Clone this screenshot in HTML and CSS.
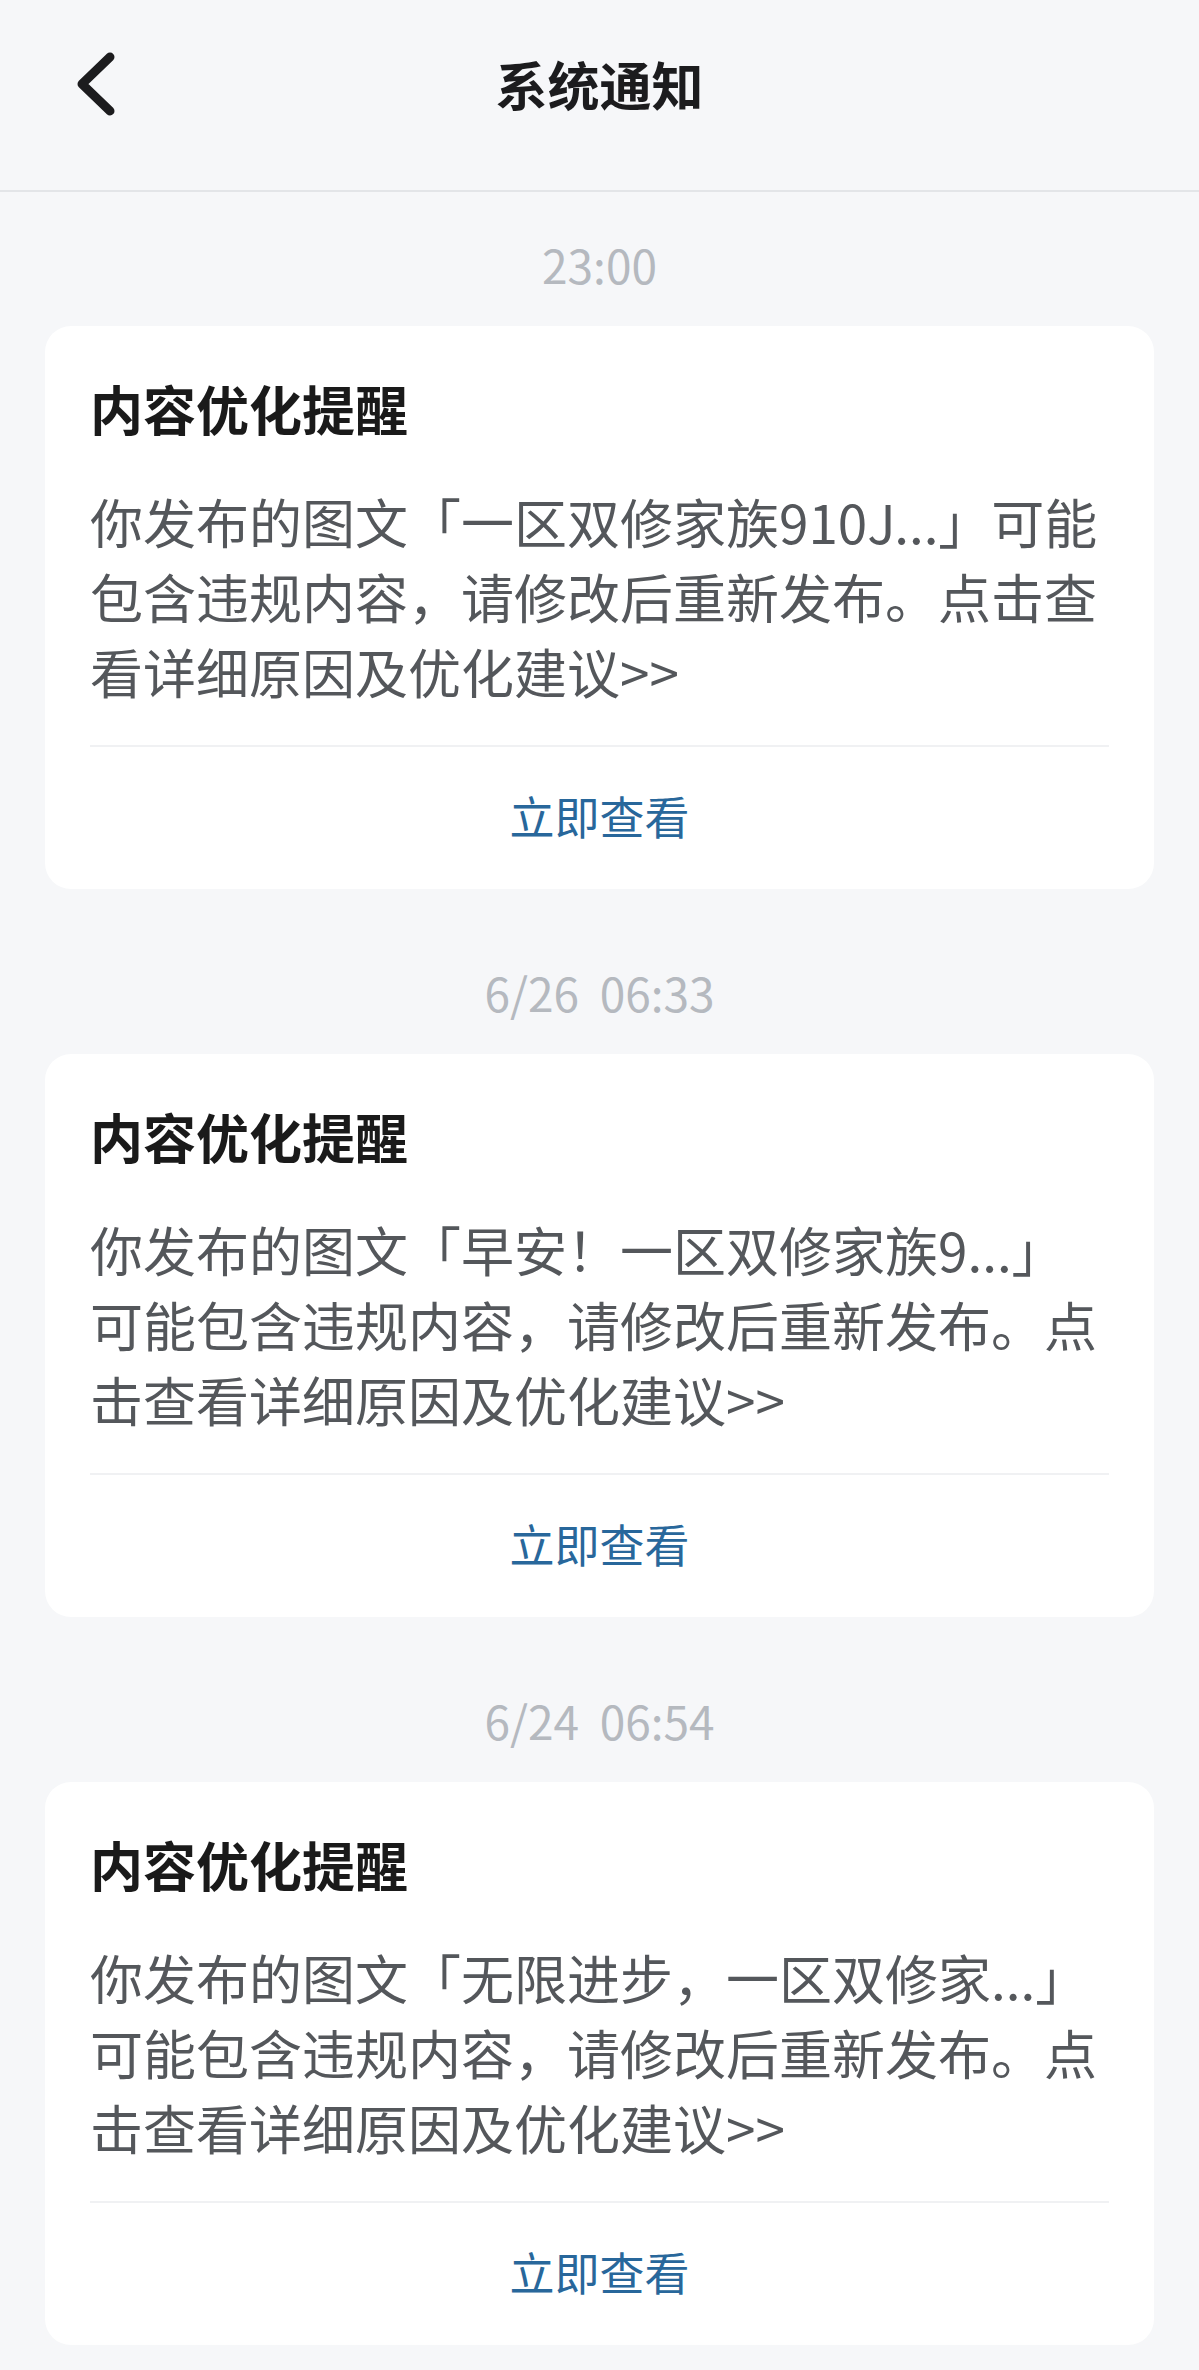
FILE: index.html
```html
<!DOCTYPE html>
<html lang="zh-CN">
<head>
<meta charset="utf-8">
<title>系统通知</title>
<link rel="stylesheet" href="styles.css">
</head>
<body>
<header class="topbar">
  <div class="topbar-left">
    <svg class="back" width="50" height="80" viewBox="0 0 50 80" aria-hidden="true">
      <path d="M40 13 L12 40 L40 67" fill="none" stroke="#1c1c1e" stroke-width="9" stroke-linecap="round" stroke-linejoin="round"/>
    </svg>
  </div>
  <h1 class="topbar-title">系统通知</h1>
  <div class="topbar-right"></div>
</header>

<main class="list">
  <section class="group">
    <div class="time">23:00</div>
    <article class="card">
      <div class="card-body">
        <h2 class="card-title">内容优化提醒</h2>
        <p class="card-text">你发布的图文「一区双修家族910J...」可能包含违规内容，请修改后重新发布。点击查看详细原因及优化建议&gt;&gt;</p>
      </div>
      <div class="card-foot"><span class="card-link">立即查看</span></div>
    </article>
  </section>

  <section class="group">
    <div class="time">6/26&nbsp;&nbsp;06:33</div>
    <article class="card">
      <div class="card-body">
        <h2 class="card-title">内容优化提醒</h2>
        <p class="card-text">你发布的图文「早安！一区双修家族9...」可能包含违规内容，请修改后重新发布。点击查看详细原因及优化建议&gt;&gt;</p>
      </div>
      <div class="card-foot"><span class="card-link">立即查看</span></div>
    </article>
  </section>

  <section class="group">
    <div class="time">6/24&nbsp;&nbsp;06:54</div>
    <article class="card">
      <div class="card-body">
        <h2 class="card-title">内容优化提醒</h2>
        <p class="card-text">你发布的图文「无限进步，一区双修家...」可能包含违规内容，请修改后重新发布。点击查看详细原因及优化建议&gt;&gt;</p>
      </div>
      <div class="card-foot"><span class="card-link">立即查看</span></div>
    </article>
  </section>
</main>
</body>
</html>
```

FILE: styles.css
```css
* {
  box-sizing: border-box;
}

html, body {
  margin: 0;
  padding: 0;
}

body {
  background: #f6f7f9;
  font-family: "Noto Sans CJK SC", "Noto Sans", sans-serif;
  color: #1c1c1e;
}

.topbar {
  height: 192px;
  padding-bottom: 22px;
  display: grid;
  grid-template-columns: 1fr auto 1fr;
  align-items: center;
  border-bottom: 2px solid #e3e5e8;
}

.topbar-left {
  display: flex;
  align-items: center;
  padding-left: 70px;
}

.back {
  display: block;
}

.topbar-title {
  margin: 0;
  font-size: 52px;
  line-height: 72px;
  font-weight: 700;
  color: #1c1c1e;
}

.list {
  padding: 42px 45px 20px;
  display: flex;
  flex-direction: column;
  gap: 73px;
}

.group {
  display: flex;
  flex-direction: column;
}

.time {
  text-align: center;
  font-size: 46px;
  line-height: 60px;
  color: #b5b9bf;
  margin-bottom: 32px;
}

.card {
  background: #ffffff;
  border-radius: 26px;
  padding: 0 52px 0 45px;
}

.card-body {
  padding: 46px 0 36px;
}

.card-title {
  margin: 0;
  font-size: 53px;
  line-height: 72px;
  font-weight: 700;
  color: #1a1a1a;
}

.card-text {
  margin: 40px 0 0;
  font-size: 53px;
  line-height: 75px;
  color: #54575b;
}

.card-foot {
  border-top: 2px solid #f0f1f3;
  margin-right: -7px;
  padding: 39px 0 43px;
  text-align: center;
}

.card-link {
  font-size: 45px;
  line-height: 60px;
  color: #28679b;
  display: inline-block;
}
```
